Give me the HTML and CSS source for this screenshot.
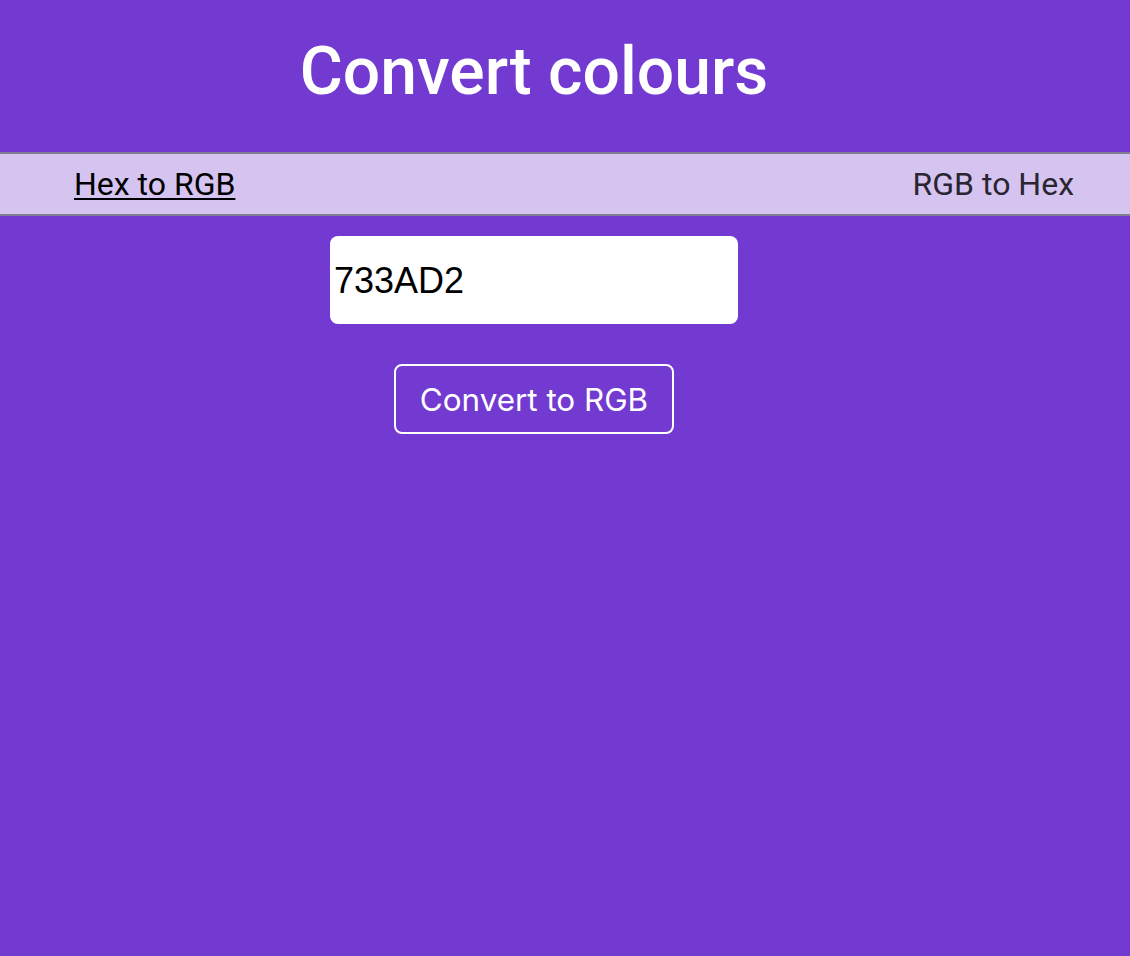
FILE: index.html
```html
<!DOCTYPE html>
<html lang="en">
<head>
<meta charset="utf-8">
<title>Convert colours</title>
<link rel="stylesheet" href="styles.css">
</head>
<body>
<header class="header">
  <h1 class="title">Convert colours</h1>
</header>
<nav class="tabs">
  <a class="tab tab-active" href="#hex">Hex to RGB</a>
  <a class="tab" href="#rgb">RGB to Hex</a>
</nav>
<main class="main">
  <input class="hex-input" type="text" value="733AD2">
  <button class="convert-btn" type="button">Convert to RGB</button>
</main>
</body>
</html>
```

FILE: styles.css
```css
html, body {
  margin: 0;
  padding: 0;
  background: #733ad2;
  height: 100%;
}
body {
  font-family: Roboto, "Noto Sans", sans-serif;
}
.header {
  width: 1068px;
  text-align: center;
  padding: 32px 0 0;
  height: 122px;
  box-sizing: border-box;
}
.title {
  margin: 0;
  font-size: 66px;
  font-weight: 500;
  color: #fff;
  line-height: 80px;
}
.tabs {
  display: flex;
  justify-content: space-between;
  align-items: center;
  height: 60px;
  padding: 0 56px 0 74px;
  background: #d5c4f0;
  border-top: 2px solid #7f7f8f;
  border-bottom: 2px solid #7f7f8f;
  margin-top: 30px;
}
.tab {
  font-size: 32px;
  color: #2a2530;
  text-decoration: none;
}
.tab-active {
  color: #000;
  text-decoration: underline;
  text-decoration-thickness: 2px;
  text-underline-offset: 3px;
}
.main {
  width: 1068px;
  display: flex;
  flex-direction: column;
  align-items: center;
  padding-top: 20px;
}
.hex-input {
  width: 408px;
  height: 88px;
  box-sizing: border-box;
  border: none;
  border-radius: 8px;
  padding: 2px 4px 0;
  font-family: "Liberation Sans", Arial, sans-serif;
  font-size: 36px;
  color: #000;
  background: #fff;
}
.convert-btn {
  margin-top: 40px;
  width: 280px;
  height: 70px;
  box-sizing: border-box;
  border: 2px solid #fff;
  border-radius: 8px;
  padding: 2px 0 0;
  background: transparent;
  color: #fff;
  font-family: Inter, Roboto, sans-serif;
  font-size: 31.4px;
}
```
